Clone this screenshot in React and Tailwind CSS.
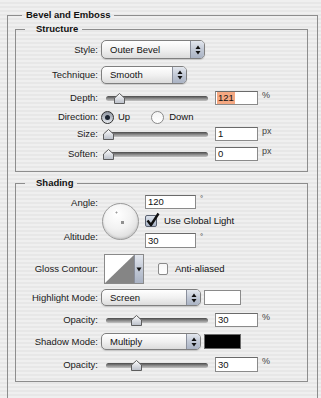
import React from 'react';

const FONT = { fontFamily: '"Liberation Sans", Arial, sans-serif' };

const Label = ({ children }) => (
  <div className="w-[82px] shrink-0 text-right text-[9.5px] leading-none text-[#1a1a1a]">{children}</div>
);

const Popup = ({ text, w, h }) => (
  <div className={`${w} ${h} ml-[3px] flex rounded-[5px] border border-[#7f7f7f] bg-gradient-to-b from-white via-[#f1f1f1] to-[#dcdcdc] shadow-[0_1px_1px_rgba(0,0,0,0.15)]`}>
    <div className="flex-1 flex items-center pl-[8px] text-[9.5px] leading-none text-[#111]">{text}</div>
    <div className="w-[14px] flex items-center justify-center border-l border-[#8a8f9c] rounded-r-[4px] bg-gradient-to-b from-[#e3e7ee] via-[#c2c9d6] to-[#aab3c4]">
      <svg width="6" height="10" viewBox="0 0 6 10">
        <path d="M3 0.5 L5.5 4 L0.5 4 Z" fill="#111" />
        <path d="M3 9.5 L5.5 6 L0.5 6 Z" fill="#111" />
      </svg>
    </div>
  </div>
);

const Slider = ({ at }) => (
  <div className="relative ml-[3px] w-[108px] h-[14px] shrink-0">
    <div className="absolute left-[5px] right-[1px] top-[5px] h-[5px] rounded-full bg-gradient-to-b from-[#4a4a4a] via-[#8a8a8a] to-[#c4c4c4]" />
    <svg className="absolute top-[2px]" style={{ left: at - 5.5 }} width="11" height="11" viewBox="0 0 11 11">
      <defs>
        <linearGradient id="th" x1="0" y1="0" x2="0" y2="1">
          <stop offset="0" stopColor="#ffffff" />
          <stop offset="1" stopColor="#b9bec8" />
        </linearGradient>
      </defs>
      <path d="M5.5 0.5 L10.5 5 L10.5 10.5 L0.5 10.5 L0.5 5 Z" fill="url(#th)" stroke="#5d5d5d" strokeWidth="1" />
    </svg>
  </div>
);

const Field = ({ value, w = 'w-[43px]', h = 'h-[14px]', hl }) => (
  <div className={`${w} ${h} shrink-0 flex items-center border border-[#8a8a8a] border-t-[#6a6a6a] bg-white pl-[1px] text-[9.5px] leading-none text-[#111]`}>
    <span className={hl ? 'bg-[#f5a882] px-[1px] py-[1px]' : 'px-[1px]'}>{value}</span>
  </div>
);

const Unit = ({ children }) => (
  <div className="ml-[4px] self-start text-[9px] leading-none text-[#444]">{children}</div>
);

const Radio = ({ on }) => (
  <div className={`w-[13px] h-[13px] rounded-full border flex items-center justify-center ${on ? 'border-[#2f2f2f] bg-gradient-to-b from-[#8d939e] to-[#e8ebf0]' : 'border-[#8a8a8a] bg-gradient-to-b from-[#f4f4f4] to-white'}`}>
    {on && <div className="w-[5px] h-[5px] rounded-full bg-[#1b2330]" />}
  </div>
);

// group box: header row carries the top line, broken by the title
const Group = ({ title, lead, titlePad, className, bodyClass, children }) => (
  <div className={`flex flex-col ${className}`}>
    <div className="flex h-[14px]">
      <div className={`${lead} self-end h-[7px] border-l border-t border-[#8d8d8d]`} />
      <div className={`${titlePad} leading-[14px] font-bold text-[9.5px] text-[#111]`}>{title}</div>
      <div className="flex-1 self-end h-[7px] border-r border-t border-[#8d8d8d]" />
    </div>
    <div className={`border-l border-r border-b border-[#8d8d8d] ${bodyClass}`}>{children}</div>
  </div>
);

export default function App() {
  return (
    <div
      className="w-[321px] h-[398px] overflow-hidden pt-[8px] pl-[7px] bg-[repeating-linear-gradient(to_bottom,#efefef_0px,#efefef_2px,#e7e7e7_2px,#e7e7e7_4px)]"
      style={FONT}
    >
      <Group title="Bevel and Emboss" lead="w-[15px]" titlePad="px-[4px]" className="w-[311px]" bodyClass="h-[400px] px-[7px]">
        <Group title="Structure" lead="w-[10px]" titlePad="pl-[11px] pr-[4px]" className="w-[293px]" bodyClass="h-[136px]">
          <div className="flex items-center mt-[4px] h-[19px]">
            <Label>Style:</Label>
            <Popup text="Outer Bevel" w="w-[104px]" h="h-[19px]" />
          </div>
          <div className="flex items-center mt-[7px] h-[18px]">
            <Label>Technique:</Label>
            <Popup text="Smooth" w="w-[86px]" h="h-[18px]" />
          </div>
          <div className="flex items-center mt-[7px] h-[14px]">
            <Label>Depth:</Label>
            <Slider at={18} />
            <div className="ml-[6px]"><Field value="121" hl /></div>
            <Unit>%</Unit>
          </div>
          <div className="flex items-center mt-[5px] h-[14px]">
            <Label>Direction:</Label>
            <div className="ml-[3px] flex items-center">
              <Radio on />
              <span className="ml-[4px] text-[9.5px] leading-none text-[#111]">Up</span>
              <div className="ml-[21px]"><Radio /></div>
              <span className="ml-[5px] text-[9.5px] leading-none text-[#111]">Down</span>
            </div>
          </div>
          <div className="flex items-center mt-[3px] h-[14px]">
            <Label>Size:</Label>
            <Slider at={7} />
            <div className="ml-[6px]"><Field value="1" /></div>
            <Unit>px</Unit>
          </div>
          <div className="flex items-center mt-[6px] h-[14px]">
            <Label>Soften:</Label>
            <Slider at={7} />
            <div className="ml-[6px]"><Field value="0" /></div>
            <Unit>px</Unit>
          </div>
        </Group>

        <Group title="Shading" lead="w-[10px]" titlePad="pl-[11px] pr-[4px]" className="w-[293px] mt-[4px]" bodyClass="h-[192px]">
          <div className="flex mt-[5px] h-[54px]">
            <div className="w-[82px] shrink-0 flex flex-col justify-between text-right text-[9.5px] leading-none text-[#1a1a1a] pt-[3px] pb-[8px]">
              <div>Angle:</div>
              <div>Altitude:</div>
            </div>
            <div className="ml-[4px] mt-[8px] relative w-[37px] h-[37px] rounded-full border border-[#9a9a9a] bg-[radial-gradient(circle_at_40%_30%,#ffffff_0%,#f2f2f2_45%,#cfcfcf_100%)] shadow-[inset_0_-1px_2px_rgba(0,0,0,0.15)]">
              <svg className="absolute left-[10px] top-[5px]" width="7" height="7" viewBox="0 0 7 7">
                <path d="M3.5 0 V7 M0 3.5 H7" stroke="#ffffff" strokeWidth="1" />
                <path d="M3.5 2.5 V4.5 M2.5 3.5 H4.5" stroke="#9a9a9a" strokeWidth="1" />
              </svg>
              <div className="absolute left-[18px] top-[17px] w-[3px] h-[3px] bg-[#8f8f8f]" />
            </div>
            <div className="ml-[6px] flex flex-col">
              <div className="flex">
                <Field value="120" w="w-[51px]" />
                <span className="ml-[4px] text-[8px] leading-none text-[#333]">°</span>
              </div>
              <div className="mt-[6px] h-[12px] flex items-center">
                <div className="relative w-[12px] h-[12px] rounded-[2px] border border-[#5a6170] bg-gradient-to-b from-[#dde3ec] to-[#a9b4c6]">
                  <svg className="absolute -left-[1px] -top-[4px]" width="15" height="16" viewBox="0 0 15 16">
                    <path d="M2.5 8.5 L6 13 L13.5 1.5" fill="none" stroke="#111" strokeWidth="2.4" strokeLinejoin="round" />
                  </svg>
                </div>
                <span className="ml-[7px] text-[9.5px] leading-none text-[#111]">Use Global Light</span>
              </div>
              <div className="mt-[6px] flex">
                <Field value="30" w="w-[51px]" h="h-[15px]" />
                <span className="ml-[4px] text-[8px] leading-none text-[#333]">°</span>
              </div>
            </div>
          </div>

          <div className="flex items-center mt-[5px] h-[30px]">
            <Label>Gloss Contour:</Label>
            <div className="ml-[6px] w-[40px] h-[30px] flex border border-[#8a8a8a] bg-white">
              <svg width="29" height="28" viewBox="0 0 29 28">
                <path d="M0 28 L29 0 L29 28 Z" fill="#858585" />
              </svg>
              <div className="flex-1 flex items-center justify-center border-l border-[#8a8f9c] bg-gradient-to-b from-[#e3e7ee] via-[#c2c9d6] to-[#aab3c4]">
                <svg width="6" height="5" viewBox="0 0 6 5">
                  <path d="M0.5 0.5 L5.5 0.5 L3 4.5 Z" fill="#111" />
                </svg>
              </div>
            </div>
            <div className="ml-[14px] w-[10px] h-[12px] rounded-[2px] border border-[#8a8a8a] bg-gradient-to-b from-[#f7f7f7] to-white" />
            <span className="ml-[7px] text-[9.5px] leading-none text-[#111]">Anti-aliased</span>
          </div>

          <div className="flex items-center mt-[5px] h-[17px]">
            <Label>Highlight Mode:</Label>
            <Popup text="Screen" w="w-[100px]" h="h-[17px]" />
            <div className="ml-[3px] w-[37px] h-[15px] border border-[#8a8a8a] bg-white" />
          </div>
          <div className="flex items-center mt-[7px] h-[14px]">
            <Label>Opacity:</Label>
            <Slider at={35} />
            <div className="ml-[6px]"><Field value="30" /></div>
            <Unit>%</Unit>
          </div>
          <div className="flex items-center mt-[6px] h-[17px]">
            <Label>Shadow Mode:</Label>
            <Popup text="Multiply" w="w-[100px]" h="h-[17px]" />
            <div className="ml-[3px] w-[37px] h-[15px] border border-[#6a6a6a] bg-black" />
          </div>
          <div className="flex items-center mt-[7px] h-[15px]">
            <Label>Opacity:</Label>
            <Slider at={35} />
            <div className="ml-[6px]"><Field value="30" h="h-[15px]" /></div>
            <Unit>%</Unit>
          </div>
        </Group>
      </Group>
    </div>
  );
}
